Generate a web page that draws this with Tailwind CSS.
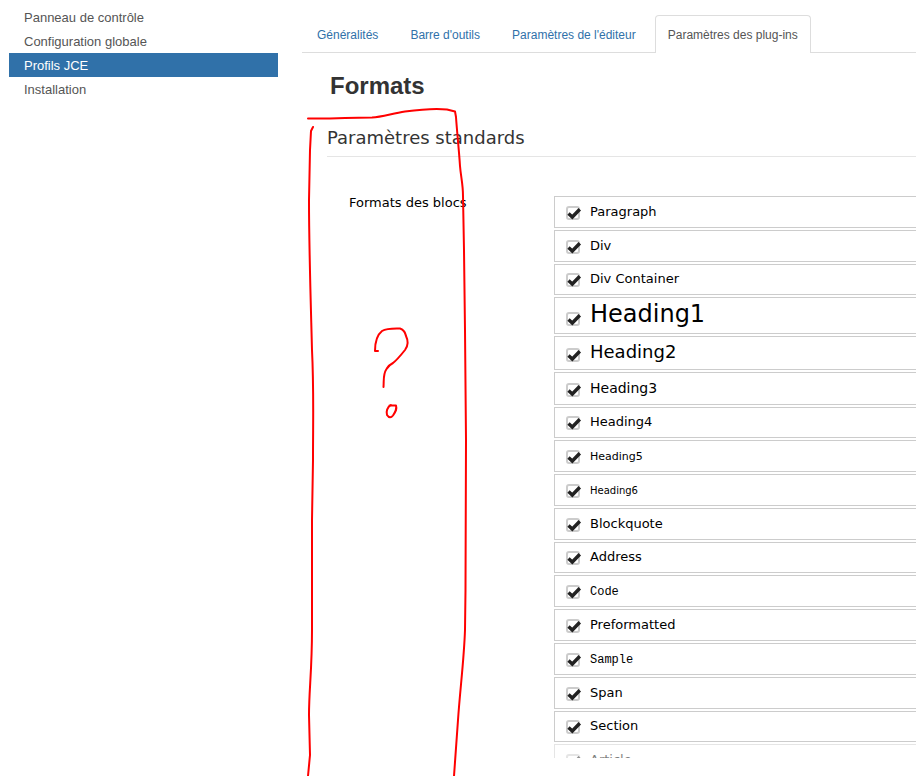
<!DOCTYPE html>
<html lang="fr">
<head>
  <meta charset="utf-8">
  <meta name="viewport" content="width=device-width, initial-scale=1">
  <title>Profils JCE</title>
  <script src="https://cdn.jsdelivr.net/npm/@tailwindcss/browser@4"></script>
</head>
<body class="relative min-h-screen overflow-x-hidden bg-white font-['Liberation_Sans',Arial,sans-serif] text-[13px] leading-6 text-[#555]">

  <div class="grid grid-cols-[269px_1fr] gap-6 pl-[9px]">
    <!-- Sidebar -->
    <nav class="pt-[5px]">
      <ul>
        <li><a href="#" class="block h-6 px-[15px] pt-px">Panneau de contrôle</a></li>
        <li><a href="#" class="block h-6 px-[15px] pt-px">Configuration globale</a></li>
        <li><a href="#" class="block h-6 bg-[#3071a9] px-[15px] pt-px text-white">Profils JCE</a></li>
        <li><a href="#" class="block h-6 px-[15px] pt-px">Installation</a></li>
      </ul>
    </nav>

    <main class="min-w-0 pt-[15px]">
      <!-- Tabs -->
      <ul class="flex gap-1.5 border-b border-[#ddd] pl-0.5 text-[12px] leading-6 whitespace-nowrap text-[#3071a9]">
        <li><a href="#" class="block px-[13px] pt-2 pb-[5px]">Généralités</a></li>
        <li><a href="#" class="block px-[13px] pt-2 pb-[5px]">Barre d'outils</a></li>
        <li><a href="#" class="block px-[13px] pt-2 pb-[5px]">Paramètres de l'éditeur</a></li>
        <li class="-mb-px"><a href="#" class="block rounded-t border border-b-0 border-[#ddd] bg-white px-3 pt-[7px] pb-1.5 text-[#555]">Paramètres des plug-ins</a></li>
      </ul>

      <h2 class="mt-[17px] pl-7 text-2xl font-bold text-[#333]">Formats</h2>

      <div class="font-['DejaVu_Sans',Verdana,sans-serif]">
        <h3 class="mt-6 ml-[25px] border-b border-[#e5e5e5] pb-1.5 text-[18px] leading-6 text-[#333]">Paramètres standards</h3>

        <div class="mt-[39px] grid grid-cols-[205px_1fr] pl-[47px] text-black">
          <div id="blocs-label" class="-mt-1.5 pt-px">Formats des blocs</div>
          <ul id="blocs" aria-labelledby="blocs-label" class="flex flex-col gap-0.5"></ul>
        </div>
      </div>
    </main>
  </div>

  <!-- Hand-drawn annotation -->
  <svg class="pointer-events-none absolute top-0 left-0" width="480" height="776" viewBox="0 0 480 776" fill="none" stroke="#f00" stroke-width="2" stroke-linecap="round" stroke-linejoin="round">
    <path d="M308 118.500L330 118.500L345 118L372 117.500C382 117 392 113.500 405 111.500C420 109.500 438 108.500 447 109.500L455 111.500L456 117C457 132 459 150 460 166C461 178 463 184 463 196L464 250L465 330L466 440L465.500 590L465 630C464 660 460 690 458 720L454 776"/>
    <path d="M313 127L311 131L310 150L309 200C309 250 311 310 312 350C314 390 313 420 313 460L312 520L312 630C312 670 309 690 309 715L310 755L308 776"/>
    <path d="M378 351H375C375 341 377 335 382 331C387 328 394 328.500 400 328.500C405 330 405 333 406 336C409 342 408 346 405 350C401 355 397 360 393 363C389 365 388 366 386.500 369C383 374 384 379 383.500 387"/>
    <path d="M391 405C387 407 386 412 387 415C389 418 391 418 393 415.500C396 411 397 409 396 405.500L389.500 405.500"/>
  </svg>

  <script>
    const blocs = [
      { name: 'Paragraph', row: 'h-8', text: 'text-[13px]' },
      { name: 'Div', row: 'h-8', text: 'text-[13px]' },
      { name: 'Div Container', row: 'h-[31px]', text: 'text-[13px]' },
      { name: 'Heading1', row: 'h-[37px]', text: 'text-[24px]' },
      { name: 'Heading2', row: 'h-[34px]', text: 'text-[18px]' },
      { name: 'Heading3', row: 'h-[33px]', text: 'text-[14px]' },
      { name: 'Heading4', row: 'h-[31px]', text: 'text-[13px]' },
      { name: 'Heading5', row: 'h-8', text: 'text-[11px]' },
      { name: 'Heading6', row: 'h-8', text: 'text-[10px]' },
      { name: 'Blockquote', row: 'h-8', text: 'text-[13px]' },
      { name: 'Address', row: 'h-[31px]', text: 'text-[13px]' },
      { name: 'Code', row: 'h-8', text: "text-[12px] font-['Liberation_Mono','Courier_New',monospace]" },
      { name: 'Preformatted', row: 'h-8', text: 'text-[13px]' },
      { name: 'Sample', row: 'h-8', text: "text-[12px] font-['Liberation_Mono','Courier_New',monospace]" },
      { name: 'Span', row: 'h-8', text: 'text-[13px]' },
      { name: 'Section', row: 'h-[31px]', text: 'text-[13px]' },
      { name: 'Article', row: 'h-8', text: 'text-[13px]', last: true }
    ];

    const list = document.getElementById('blocs');

    blocs.forEach(bloc => {
      const item = document.createElement('li');
      // the last row is cut off and fades out
      item.className = bloc.last ? 'h-3.5 overflow-hidden opacity-50' : '';
      item.innerHTML = `
        <label class="${bloc.row} flex items-end border border-r-0 border-[#ccc] bg-white pb-[7px] pl-[11px]">
          <span class="block leading-none whitespace-nowrap"><input type="checkbox" checked class="peer size-[14px] appearance-none rounded-[3px] border-2 border-[#ccc] bg-white align-[-4px]"><svg class="pointer-events-none invisible mr-2 -ml-[14px] inline h-[14px] w-4 align-[-4px] peer-checked:visible" viewBox="0 0 16 14" fill="none" stroke="#222" stroke-width="3.400"><path d="M2.500 7.500L6.300 11L13.800 3.200"/></svg><span class="${bloc.text} leading-none">${bloc.name}</span></span>
        </label>`;
      list.appendChild(item);
    });
  </script>
</body>
</html>
